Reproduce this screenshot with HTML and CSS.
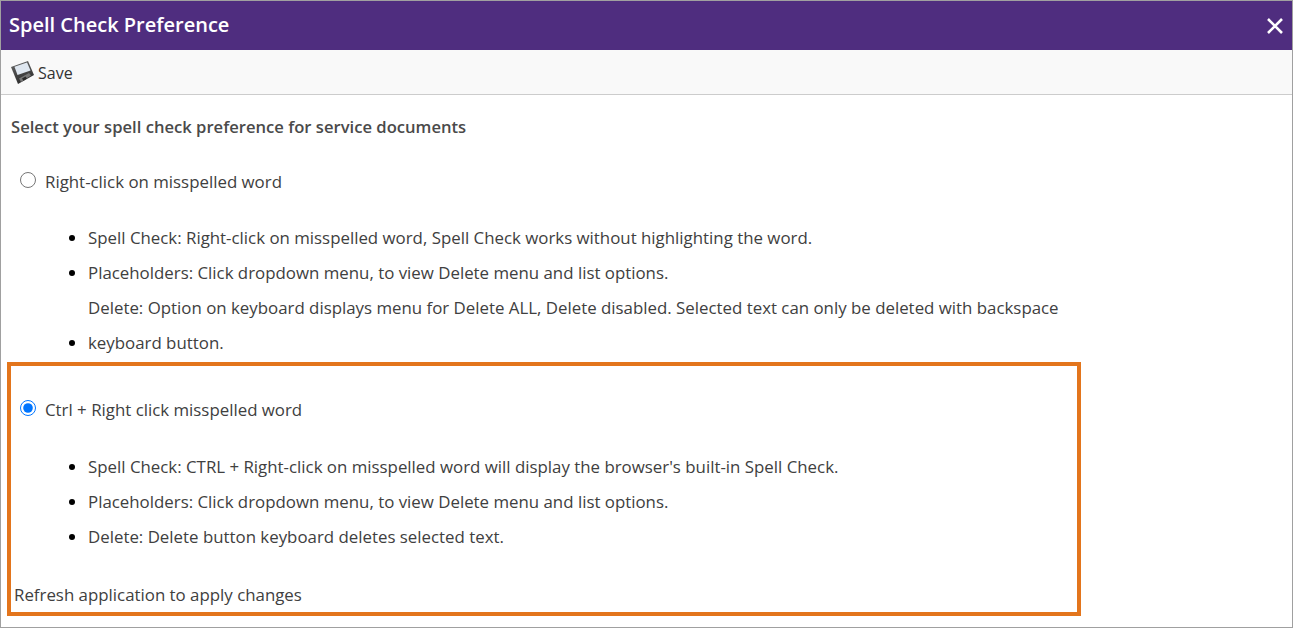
FILE: index.html
```html
<!DOCTYPE html>
<html lang="en">
<head>
<meta charset="utf-8">
<title>Spell Check Preference</title>
<link rel="stylesheet" href="styles.css">
</head>
<body>
<div class="dialog">
  <header class="titlebar">
    <h1 class="title">Spell Check Preference</h1>
    <svg class="close" width="16" height="16" viewBox="0 0 16 16" aria-label="Close"><path d="M1 1 L15 15 M15 1 L1 15" stroke="#fff" stroke-width="2.6" fill="none"/></svg>
  </header>
  <div class="toolbar">
    <svg class="save-icon" width="24" height="24" viewBox="0 0 24 24" aria-hidden="true">
      <defs>
        <linearGradient id="disk" x1="0" y1="0" x2="0.3" y2="1">
          <stop offset="0" stop-color="#6a6a6a"/>
          <stop offset="1" stop-color="#2e2e2e"/>
        </linearGradient>
      </defs>
      <path d="M1 7 L18 1 L24 15 L8 24 Z" fill="url(#disk)"/>
      <path d="M4.5 6.8 L17 2.5 L20.5 10.5 L7.5 15 Z" fill="#dfe7f0"/>
      <path d="M9 18.5 L19 13 L21 15.5 L11 22 Z" fill="#767676"/>
      <path d="M12 18.5 L15.5 16.5 L17 18.5 L13.5 20.8 Z" fill="#2a2a2a"/>
    </svg>
    <span class="save-label">Save</span>
  </div>
  <main class="content">
    <p class="intro">Select your spell check preference for service documents</p>
    <label class="option option-first"><input type="radio" name="pref"><span>Right-click on misspelled word</span></label>
    <ul class="notes notes-first">
      <li>Spell Check: Right-click on misspelled word, Spell Check works without highlighting the word.</li>
      <li>Placeholders: Click dropdown menu, to view Delete menu and list options.<br>Delete: Option on keyboard displays menu for Delete ALL, Delete disabled. Selected text can only be deleted with backspace</li>
      <li>keyboard button.</li>
    </ul>
    <label class="option option-second"><input type="radio" name="pref" checked><span>Ctrl + Right click misspelled word</span></label>
    <ul class="notes notes-second">
      <li>Spell Check: CTRL + Right-click on misspelled word will display the browser's built-in Spell Check.</li>
      <li>Placeholders: Click dropdown menu, to view Delete menu and list options.</li>
      <li>Delete: Delete button keyboard deletes selected text.</li>
    </ul>
    <p class="refresh">Refresh application to apply changes</p>
  </main>
  <div class="highlight"></div>
</div>
</body>
</html>
```

FILE: styles.css
```css
* { box-sizing: border-box; }
html, body { margin: 0; padding: 0; height: 100%; background: #fff; }
body { font-family: "Open Sans", sans-serif; font-size: 16.85px; color: #404040; }
.dialog { position: relative; width: 1293px; height: 628px; border: 1px solid #a0a0a0; overflow: hidden; }
.titlebar { height: 49px; background: #4f2d7f; display: flex; align-items: center; justify-content: space-between; padding: 0 9px 0 8px; }
.title { margin: -2px 0 0; font-size: 20px; font-weight: 600; color: #fff; line-height: 49px; }
.close { display: block; }
.toolbar { height: 45px; background: #f9f9f9; border-bottom: 1px solid #ccc; display: flex; align-items: center; padding-left: 9px; gap: 4px; }
.save-icon { display: block; }
.save-label { color: #333; font-size: 16px; margin-top: 1px; }
.content { padding: 0 10px; }
.intro { margin: 0; padding-top: 20px; line-height: 24px; font-weight: 600; font-size: 16.63px; color: #4a4a4a; }
.option { display: flex; align-items: flex-start; line-height: 24px; padding-left: 9px; }
.option input { margin: 2px 9px 0 0; width: 16px; height: 16px; flex: none; }
.option-first { margin-top: 31px; }
.option-second { margin-top: 38px; }
.notes { margin: 0; padding: 0 0 0 77px; }
.notes li { line-height: 35px; }
.notes li::marker { color: #000; }
.notes-first { margin-top: 26px; }
.notes-second { margin-top: 27px; }
.refresh { margin: 29px 0 0 3px; line-height: 24px; }
.highlight { position: absolute; left: 6px; top: 361px; width: 1074px; height: 254px; border: 4px solid #e3751c; pointer-events: none; }
```
